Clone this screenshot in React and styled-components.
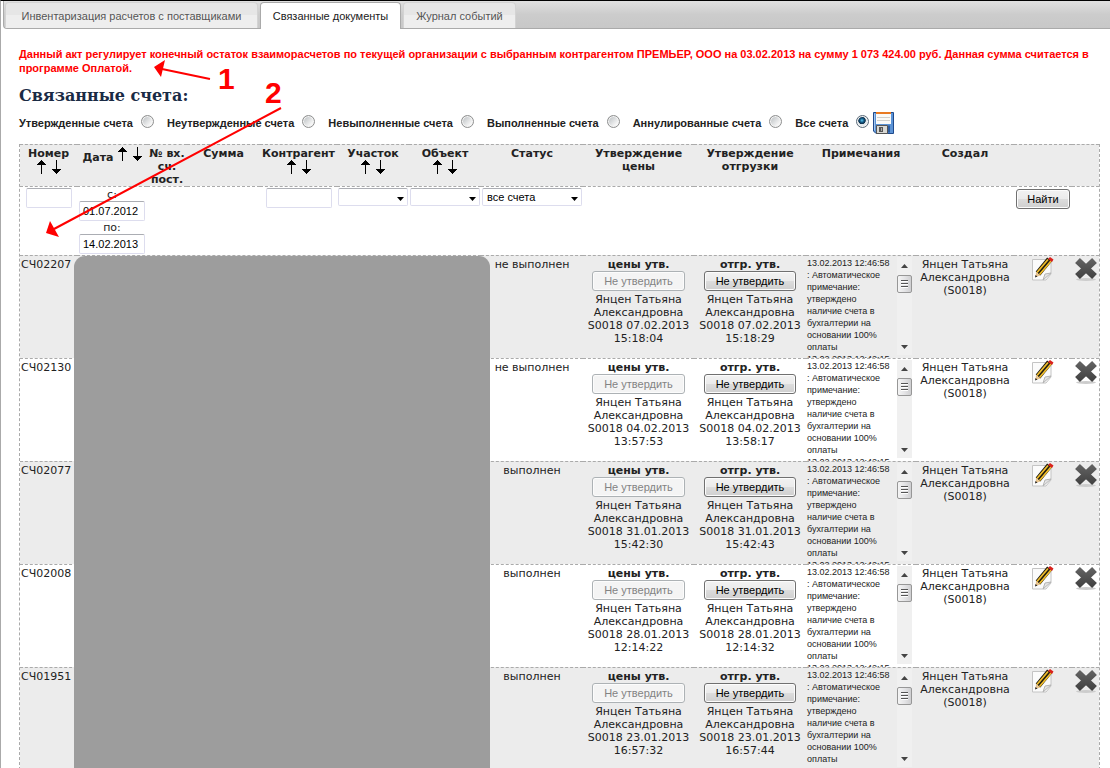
import React from 'react';
import styled, { createGlobalStyle, css } from 'styled-components';

const GlobalStyle = createGlobalStyle`
  * { box-sizing: border-box; }
  html { scrollbar-width: none; }
  body {
    margin: 0;
    background: #fff;
    color: #222;
    font: 11px/13px "DejaVu Sans", sans-serif;
  }
  button, input, select { margin: 0; font-family: "Liberation Sans", sans-serif; }
`;

const Page = styled.div`
  position: relative;
  min-height: 100vh;
  border-top: 1px solid #000;
  border-left: 1px solid #aaa;
`;

const TabBar = styled.nav`
  display: flex;
  align-items: stretch;
  height: 28px;
  margin-left: 2px;
  padding-left: 1px;
  gap: 2px;
  border: solid #aaa;
  border-width: 0 0 1px 1px;
  border-bottom-left-radius: 4px;
  background: linear-gradient(#e0e0e0, #ccc 50%, #c8c8c8);
`;

const Tab = styled.button`
  width: ${(p) => p.$width}px;
  margin-top: 1px;
  padding: 0;
  border: 1px solid #d3d3d3;
  border-bottom: 0;
  border-radius: 4px 4px 0 0;
  background: linear-gradient(#e6e6e6 50%, #eee 50%);
  color: #555;
  font-size: 11px;
  line-height: 24px;
  white-space: nowrap;
  ${(p) => p.$active && css`
    margin-bottom: -1px;
    border-color: #aaa;
    background: #fff;
    color: #212121;
  `}
`;

const Content = styled.main`
  padding: 18px 10px 0 18px;
`;

const Notice = styled.p`
  margin: 0;
  color: #f00;
  font: bold 11px/14px "Liberation Sans", sans-serif;
`;

const Title = styled.h1`
  margin: 9px 0 0;
  color: #1a2b45;
  font: bold 16px/24px "DejaVu Serif", serif;
`;

const FilterBar = styled.div`
  display: flex;
  align-items: center;
  height: 36px;
  padding-bottom: 6px;
  font: bold 11px/14px "Liberation Sans", sans-serif;
`;

const RadioLabel = styled.label`
  display: flex;
  align-items: center;
  gap: 8px;
  margin-right: 13px;
  white-space: nowrap;
  &:last-of-type { margin-right: 4px; }
`;

const Radio = styled.input.attrs({ type: 'radio' })`
  appearance: none;
  width: 13px;
  height: 13px;
  margin: -3px 0 0;
  border: 1px solid #8e8f8f;
  border-radius: 50%;
  background: linear-gradient(135deg, #b5babd, #f6f6f6 75%);
  box-shadow: inset 0 0 0 1px #f4f4f4;
  &:checked {
    border-color: #5a6a78;
    background: radial-gradient(circle at 45% 40%, #5cc6ee 0, #145a86 22%, #0b2c47 38%, #e4e9ec 46%);
  }
`;

const IconButton = styled.button`
  display: inline-flex;
  padding: 0;
  border: 0;
  background: none;
  vertical-align: top;
`;

const TableWrap = styled.div`
  position: relative;
`;

const Table = styled.table`
  width: 100%;
  table-layout: fixed;
  border-collapse: separate;
  border-spacing: 0;
  border: dashed #aaa;
  border-width: 0 1px;
  text-align: center;
`;

const Row = styled.tr`
  height: ${(p) => p.$height}px;
  background: ${(p) => (p.$shaded ? '#ececec' : '#fff')};
`;

const cell = css`
  padding: 2px 0 0;
  border-top: 1px dashed #aaa;
  vertical-align: top;
`;

const Head = styled.th`
  ${cell}
`;

const Cell = styled.td`
  ${cell}
  padding-top: ${(p) => p.$top ?? 2}px;
`;

const NumberCell = styled(Cell)`
  padding-left: 1px;
  text-align: left;
`;

const Sorts = styled.div`
  display: ${(p) => (p.$inline ? 'inline-flex' : 'flex')};
  justify-content: center;
  gap: 6px;
  margin-left: ${(p) => (p.$inline ? 4 : 0)}px;
`;

const SortButton = styled(IconButton)`
  width: 9px;
  height: 14px;
`;

const field = css`
  height: ${(p) => p.$height ?? 20}px;
  border: 1px solid #dde;
  border-top-color: #abadb3;
  border-radius: 2px;
  background: #fff;
  color: #000;
  font-size: 11px;
`;

const TextField = styled.input`
  ${field}
  display: block;
  width: ${(p) => p.$width}px;
  margin: 0 auto;
  padding: 0 3px;
`;

const DateLabel = styled.label`
  display: block;
`;

const SelectBox = styled.div`
  position: relative;
  margin: 0 1px;
`;

const Select = styled.select`
  ${field}
  appearance: none;
  display: block;
  width: 100%;
  padding: 0 4px;
`;

const SelectArrow = styled.svg`
  position: absolute;
  right: 4px;
  top: 9px;
  pointer-events: none;
`;

const Button = styled.button`
  height: 20px;
  padding: 0 10px;
  border: 1px solid #707070;
  border-radius: 3px;
  background: linear-gradient(#f2f2f2, #ebebeb 50%, #ddd 50%, #cfcfcf);
  box-shadow: inset 0 0 0 1px #fcfcfc;
  color: #000;
  font-size: 11px;
  line-height: 18px;
  white-space: nowrap;
  &:disabled {
    border-color: #adb2b5;
    background: #f4f4f4;
    color: #838383;
  }
`;

const Approval = styled.div`
  display: flex;
  flex-direction: column;
  align-items: center;
  button { margin-bottom: 2px; padding: 0 11px; }
`;

const Notes = styled.div`
  display: flex;
  justify-content: space-between;
  height: 101px;
  padding: 0 4px 0 1px;
  overflow: hidden;
  text-align: left;
  font: 9px/12px "Liberation Sans", sans-serif;
`;

const NoteText = styled.div`
  width: 88px;
  white-space: nowrap;
`;

const ScrollTrack = styled.div`
  display: flex;
  flex-direction: column;
  align-items: center;
  width: 15px;
  height: 98px;
  padding: 7px 0 6px;
  background: #f0f0f0;
`;

const ScrollThumb = styled.div`
  display: flex;
  flex-direction: column;
  justify-content: center;
  gap: 1px;
  width: 15px;
  height: 18px;
  margin: 7px 0 auto;
  padding: 0 3px;
  border: 1px solid #979797;
  border-radius: 2px;
  background: linear-gradient(90deg, #f5f5f5, #e4e4e6 50%, #cfcfd1);
`;

const Grip = styled.i`
  height: 2px;
  border-top: 1px solid #555;
  background: #fff;
`;

const Redaction = styled.div`
  position: absolute;
  top: 112px;
  bottom: 0;
  left: 55px;
  width: 416px;
  border-radius: 11px 11px 0 0;
  background: #9d9d9d;
`;

const Markup = styled.svg`
  position: absolute;
  top: -1px;
  left: -1px;
  pointer-events: none;
`;

const MarkNumber = styled.span`
  position: absolute;
  left: ${(p) => p.$x}px;
  top: ${(p) => p.$y}px;
  color: #f00;
  font: bold 30px/30px "Liberation Sans", sans-serif;
`;

const Up = () => (
  <svg width="9" height="14" viewBox="0 0 9 14" shapeRendering="crispEdges">
    <path d="M4 0h1v1h1v1h1v1h1v1h1v1H5v9H4V5H0V4h1V3h1V2h1V1h1z" />
  </svg>
);
const Down = () => (
  <svg width="9" height="14" viewBox="0 0 9 14" shapeRendering="crispEdges">
    <path d="M4 14h1v-1h1v-1h1v-1h1v-1h1V9H5V0H4v9H0v1h1v1h1v1h1v1h1z" />
  </svg>
);
const Caret = ({ up }) => (
  <svg width="7" height="4" viewBox="0 0 7 4">
    <path d={up ? 'M0 4 3.500 0 7 4z' : 'M0 0h7L3.500 4z'} fill="#444" />
  </svg>
);
const Floppy = () => (
  <svg width="21" height="22" viewBox="0 0 21 22">
    <path d="M.5.5h20v21H3L.5 19z" fill="#5b93d6" stroke="#1f4a8c" />
    <path d="M1.500 1.500v17" stroke="#a3c6ee" />
    <path d="M3 2h15v10H3z" fill="#fafaf8" />
    <path d="M3 0h15v2H3z" fill="#e87a22" />
    <path d="M4 5.500h13M4 8.500h13" stroke="#d0d0cc" />
    <path d="M3.500 13.500h11v8h-11z" fill="#d8d8d4" stroke="#555" />
    <path d="M6 15h4v5H6z" fill="#555" />
    <path d="M8 16h1v3H8z" fill="#aaa" />
    <path d="M15 13.500h2v7h-2z" fill="#2c5ca0" />
  </svg>
);
const Pencil = () => (
  <svg width="24" height="24" viewBox="0 0 24 24">
    <path d="M1.500 2.500h18.500V17l-5 6H1.500z" fill="#fbfbfb" stroke="#c4c4c4" />
    <path d="m12 23 2-6 6-1z" fill="#e4e4e4" stroke="#b5b5b5" />
    <path d="M7 16.500 18.500 2.500" stroke="#1d1a10" strokeWidth="6" />
    <path d="M6 15.500 17 2.500M8.500 17.500 20 4" stroke="#f0bd2c" strokeWidth="1.800" />
    <path d="m4.500 20 .5-5 4.500 3.500z" fill="#e9c48d" />
    <path d="m4 20.500.5-2.500 2 1.500z" fill="#222" />
    <path d="m17 2 2-2 3.500 2.500L21 5z" fill="#d9211c" />
  </svg>
);
const Cross = () => (
  <svg width="24" height="24" viewBox="0 0 24 24">
    <defs>
      <linearGradient id="cross" gradientUnits="userSpaceOnUse" x1="0" y1="0" x2="0" y2="24">
        <stop stopColor="#666" />
        <stop offset="1" stopColor="#3c3c3c" />
      </linearGradient>
    </defs>
    <ellipse cx="12" cy="22.500" rx="10" ry="1.500" fill="#ccc" />
    <path d="M3.500 3.500 20.500 19.500M20.500 3.500 3.500 19.500" stroke="url(#cross)" strokeWidth="7" />
  </svg>
);

const SortPair = ({ inline }) => (
  <Sorts $inline={inline}>
    <SortButton aria-label="По возрастанию"><Up /></SortButton>
    <SortButton aria-label="По убыванию"><Down /></SortButton>
  </Sorts>
);

const DropDown = ({ label, text = '' }) => (
  <SelectBox>
    <Select aria-label={label} $height={18}><option>{text}</option></Select>
    <SelectArrow width="7" height="4" viewBox="0 0 7 4"><path d="M0 0h7L3.500 4z" /></SelectArrow>
  </SelectBox>
);

const ApprovalCell = ({ title, stamp, disabled }) => {
  const [date, time] = stamp.split(' ');
  return (
    <Approval>
      <b>{title}</b>
      <Button disabled={disabled}>Не утвердить</Button>
      <span>Янцен Татьяна</span>
      <span>Александровна</span>
      <span>S0018 {date}</span>
      <span>{time}</span>
    </Approval>
  );
};

const noteLines = [
  '13.02.2013 12:46:58', ': Автоматическое', 'примечание:', 'утверждено', 'наличие счета в',
  'бухгалтерии на', 'основании 100%', 'оплаты', '13.02.2013 12:42:15',
];
const columns = [57, 70, 40, 73, 77, 72, 72, 102, 111, 112, 110, 98, 58, 27];
const radios = ['Утвержденные счета', 'Неутвержденные счета', 'Невыполненные счета', 'Выполненные счета', 'Аннулированные счета', 'Все счета'];
const invoices = [
  ['СЧ02207', 'не выполнен', '07.02.2013 15:18:04', '07.02.2013 15:18:29'],
  ['СЧ02130', 'не выполнен', '04.02.2013 13:57:53', '04.02.2013 13:58:17'],
  ['СЧ02077', 'выполнен', '31.01.2013 15:42:30', '31.01.2013 15:42:43'],
  ['СЧ02008', 'выполнен', '28.01.2013 12:14:22', '28.01.2013 12:14:32'],
  ['СЧ01951', 'выполнен', '23.01.2013 16:57:32', '23.01.2013 16:57:44'],
];

export default function App() {
  return (
    <Page>
      <GlobalStyle />
      <TabBar>
        <Tab $width={253}>Инвентаризация расчетов с поставщиками</Tab>
        <Tab $width={141} $active>Связанные документы</Tab>
        <Tab $width={113}>Журнал событий</Tab>
      </TabBar>
      <Content>
        <Notice>
          Данный акт регулирует конечный остаток взаиморасчетов по текущей организации с выбранным контрагентом ПРЕМЬЕР, ООО на 03.02.2013 на сумму 1 073 424.00 руб. Данная сумма считается в программе Оплатой.
        </Notice>
        <Title>Связанные счета:</Title>
        <FilterBar>
          {radios.map((label) => (
            <RadioLabel key={label}>
              {label}
              <Radio name="kind" defaultChecked={label === 'Все счета'} />
            </RadioLabel>
          ))}
          <IconButton aria-label="Сохранить"><Floppy /></IconButton>
        </FilterBar>
        <TableWrap>
          <Table>
            <colgroup>
              {columns.map((width, i) => <col key={i} width={width} />)}
            </colgroup>
            <thead>
              <Row $height={42} $shaded>
                <Head>Номер<SortPair /></Head>
                <Head>Дата<SortPair inline /></Head>
                <Head>№ вх. сч. пост.</Head>
                <Head>Сумма</Head>
                <Head>Контрагент<SortPair /></Head>
                <Head>Участок<SortPair /></Head>
                <Head>Объект<SortPair /></Head>
                <Head>Статус</Head>
                <Head>Утверждение цены</Head>
                <Head>Утверждение отгрузки</Head>
                <Head>Примечания</Head>
                <Head>Создал</Head>
                <Head />
                <Head />
              </Row>
            </thead>
            <tbody>
              <Row $height={69}>
                <Cell $top={1}><TextField $width={46} aria-label="Номер" /></Cell>
                <Cell $top={1}>
                  <DateLabel>с:<TextField $width={66} defaultValue="01.07.2012" /></DateLabel>
                  <DateLabel>по:<TextField $width={66} defaultValue="14.02.2013" /></DateLabel>
                </Cell>
                <Cell />
                <Cell />
                <Cell $top={1}><TextField $width={66} aria-label="Контрагент" /></Cell>
                <Cell $top={1}><DropDown label="Участок" /></Cell>
                <Cell $top={1}><DropDown label="Объект" /></Cell>
                <Cell $top={1}><DropDown label="Статус" text="все счета" /></Cell>
                <Cell />
                <Cell />
                <Cell />
                <Cell />
                <Cell><Button>Найти</Button></Cell>
                <Cell />
              </Row>
              {invoices.map(([number, status, price, shipment], i) => (
                <Row key={number} $height={103} $shaded={i % 2 === 0}>
                  <NumberCell>{number}</NumberCell>
                  <Cell colSpan={6} />
                  <Cell>{status}</Cell>
                  <Cell><ApprovalCell title="цены утв." stamp={price} disabled /></Cell>
                  <Cell><ApprovalCell title="отгр. утв." stamp={shipment} /></Cell>
                  <Cell $top={1}>
                    <Notes>
                      <NoteText>{noteLines.map((line) => <div key={line}>{line}</div>)}</NoteText>
                      <ScrollTrack>
                        <Caret up />
                        <ScrollThumb><Grip /><Grip /><Grip /></ScrollThumb>
                        <Caret />
                      </ScrollTrack>
                    </Notes>
                  </Cell>
                  <Cell>Янцен Татьяна Александровна (S0018)</Cell>
                  <Cell $top={1}><IconButton aria-label="Изменить"><Pencil /></IconButton></Cell>
                  <Cell $top={1}><IconButton aria-label="Удалить"><Cross /></IconButton></Cell>
                </Row>
              ))}
            </tbody>
          </Table>
          <Redaction />
        </TableWrap>
      </Content>
      <Markup width="300" height="250" viewBox="0 0 300 250">
        <path d="M210 79 162 69M281 108 54 229" stroke="#f00" strokeWidth="2" />
        <path d="m154 67 11-7-4 17zM46 233l4-12 9 16z" fill="#f00" />
      </Markup>
      <MarkNumber $x={217} $y={63}>1</MarkNumber>
      <MarkNumber $x={264} $y={77}>2</MarkNumber>
    </Page>
  );
}
